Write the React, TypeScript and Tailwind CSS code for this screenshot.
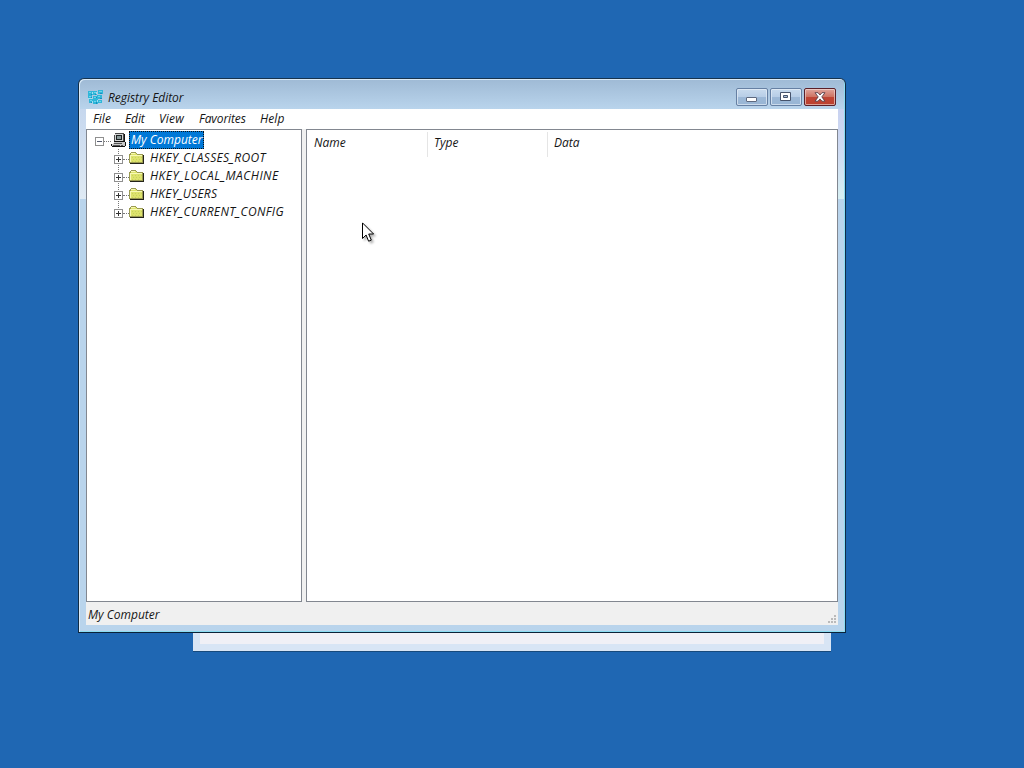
import type { ReactNode } from "react";

const menus = [
  { label: "File", box: "w-[32px]", tracking: "tracking-[0.05px]" },
  { label: "Edit", box: "w-[34px]", tracking: "tracking-[-0.1px]" },
  { label: "View", box: "w-[40px]", tracking: "tracking-[0.2px]" },
  { label: "Favorites", box: "w-[61px]", tracking: "tracking-[-0.1px]" },
  { label: "Help", box: "w-[40px]", tracking: "tracking-[0.1px]" },
];

const keys = [
  { label: "HKEY_CLASSES_ROOT", tracking: "tracking-[0.3px]" },
  { label: "HKEY_LOCAL_MACHINE", tracking: "tracking-[0.46px]" },
  { label: "HKEY_USERS", tracking: "tracking-[0.2px]" },
  { label: "HKEY_CURRENT_CONFIG", tracking: "tracking-[0.34px]" },
];

const columns = [
  { label: "Name", box: "w-[121px] border-r pl-[7px]" },
  { label: "Type", box: "w-[120px] border-r pl-[6px]" },
  { label: "Data", box: "w-[120px] pl-[6px]" },
];

function RegistryIcon() {
  return (
    <svg width="16" height="16" viewBox="0 0 16 16" shapeRendering="crispEdges">
      <path fill="#2fb6d9" d="M0 2h5v4H0zM5 2h4v4H5zM10 1h5v4h-5zM0 6h4v4H0zM5 7h4v3H5zM9 6h5v4H9zM1 10h4v4H1zM5 10h5v5H5zM10 11h4v3h-4z" />
      <path fill="#6ad6ec" d="M1 3h2v1H1zM6 3h2v1H6zM11 2h3v1h-3zM1 7h2v1H1zM6 8h2v1H6zM10 7h2v1h-2zM2 11h2v1H2zM6 12h2v1H6zM11 12h2v1h-2z" />
      <path fill="#a5dcee" d="M4 3h1v2H4zM8 3h1v2H8zM0 9h4v1H0zM4 12h1v2H4zM9 11h1v2H9z" />
      <path fill="#178fbe" d="M3 5h1v1H3zM7 5h1v1H7zM12 4h2v1h-2zM3 8h1v1H3zM8 8h1v1H8zM12 9h2v1h-2zM3 13h1v1H3zM8 13h1v2H8z" />
    </svg>
  );
}

function ComputerIcon() {
  return (
    <svg width="16" height="16" viewBox="0 0 16 16" shapeRendering="crispEdges">
      <path fill="#4a4a4a" d="M4 1h9v1h1v8H3V3h1z" />
      <path fill="#111" d="M13 2h1v8h-1zM3 9h10v1H3zM14 10h1v4h-1v1H1v-1h13zM0 12h1v2H0z" />
      <path fill="#d2d2d2" d="M4 2h8v1H4zM4 3h1v6H4zM11 3h1v6h-1zM5 8h6v1H5z" />
      <path fill="#1d2424" d="M5 3h6v5H5z" />
      <path fill="#8a9999" d="M6 4h4v3H6z" />
      <path fill="#c9c9c9" d="M3 10h11v1H3zM2 11h12v1H2zM1 12h13v2H1z" />
      <path fill="#555" d="M3 11h8v1H3zM2 13h7v1H2zM10 13h2v1h-2z" />
    </svg>
  );
}

function FolderIcon() {
  return (
    <svg width="15" height="12" viewBox="0 0 15 12" shapeRendering="crispEdges">
      <path fill="#9a9a52" d="M2 0h5v1h1v1h6v9H0V2h1V1h1z" />
      <path fill="#dde36c" d="M2 1h5v1h1v1h5v7H1V3h1z" />
      <path fill="#f7f8b6" d="M2 1h4v1H2zM1 3h12v1H1zM1 4h1v6H1z" />
      <path fill="#c8d15e" d="M3 5h1v1H3zM6 5h1v1H6zM9 5h1v1H9zM12 5h1v1h-1zM4 7h1v1H4zM7 7h1v1H7zM10 7h1v1h-1zM3 9h1v1H3zM6 9h1v1H6zM9 9h1v1H9z" />
      <path fill="#24241a" d="M14 3h1v9h-1zM1 11h14v1H1z" />
    </svg>
  );
}

function Expander({ open = false }: { open?: boolean }) {
  return (
    <svg width="9" height="9" viewBox="0 0 9 9" shapeRendering="crispEdges" className="shrink-0">
      <path fill="#fff" stroke="#8f8f8f" d="M.5.5h8v8h-8z" />
      <path fill={open ? "#555b70" : "#333"} d={open ? "M2 4h5v1H2z" : "M2 4h5v1H2zM4 2h1v5H4z"} />
    </svg>
  );
}

function CaptionButton({ danger = false, children }: { danger?: boolean; children: ReactNode }) {
  const skin = danger
    ? "border-[#5b2029] bg-linear-to-b from-[#e0a69d] from-0% via-[#cf7666] via-45% to-[#c2604e]"
    : "border-[#6680a3] bg-linear-to-b from-[#c9dbee] from-0% via-[#b9cfe7] via-45% to-[#a9c3df]";
  return (
    <div className={`flex h-[18px] w-8 flex-col rounded-[2px] border shadow-[inset_0_0_0_1px_rgba(255,255,255,0.4)] ${skin}`}>
      <div className={`mx-px mt-2 mb-px h-[7px] shrink-0 ${danger ? "bg-[#b93626]/75" : "bg-[#91afd0]/70"}`} />
      <div className="-mt-[16px] flex h-[14px] shrink-0 items-center justify-center pr-px">{children}</div>
    </div>
  );
}

function TitleBar() {
  return (
    <div className="flex h-[30px] shrink-0 items-start pr-[9px] pl-[9px]">
      <div className="mt-[10px] h-4 w-4">
        <RegistryIcon />
      </div>
      <span className="mt-[11px] ml-1 text-[12px] leading-4 tracking-[-0.05px]">Registry Editor</span>
      <div className="mt-[9px] ml-auto flex gap-0.5">
        <CaptionButton>
          <svg width="11" height="12" viewBox="0 0 11 12" className="mt-[3px]">
            <rect x=".5" y="5.5" width="10" height="4" rx=".5" fill="#fff" stroke="#5d697f" />
          </svg>
        </CaptionButton>
        <CaptionButton>
          <svg width="11" height="9" viewBox="0 0 11 9" className="mt-[1px]">
            <path fill="#fff" stroke="#46536b" d="M.5.5h10v8H.5z" />
            <path fill="#a9bfd9" stroke="#46536b" d="M3.5 3.5h4v2h-4z" />
          </svg>
        </CaptionButton>
        <CaptionButton danger>
          <svg width="12" height="10" viewBox="0 0 12 10" className="mt-[1px]">
            <path
              fill="#fff"
              stroke="#59404a"
              strokeWidth=".9"
              d="M1 .7h3L6 3 8 .7h3L7.8 4.9 11 9.2H8L6 6.9 4 9.2H1l3.2-4.3z"
            />
          </svg>
        </CaptionButton>
      </div>
    </div>
  );
}

function Tree() {
  return (
    <div className="relative w-[216px] border border-[#828790] bg-white pt-px">
      <div className="absolute top-[19px] left-[31px] h-[65px] border-l border-dotted border-[#777]" />
      <div className="flex h-[18px] items-center pl-2">
        <div className="mt-[3px]">
          <Expander open />
        </div>
        <div className="mt-[3px] w-[7px] border-t border-dotted border-[#777]" />
        <div className="h-4 w-4">
          <ComputerIcon />
        </div>
        <span className="ml-[2px] h-[18px] w-[75px] border border-dotted border-[#111] bg-[#0078d7] pl-px text-[12px] leading-[16px] tracking-[0px] whitespace-nowrap text-white">
          My Computer
        </span>
      </div>
      {keys.map((key) => (
        <div key={key.label} className="relative flex h-[18px] items-center pl-[27px]">
          <div className="mt-[3px]">
            <Expander />
          </div>
          <div className="mt-[3px] w-[6px] border-t border-dotted border-[#777]" />
          <FolderIcon />
          <span className={`ml-[6px] text-[12px] leading-[18px] whitespace-nowrap ${key.tracking}`}>
            {key.label}
          </span>
        </div>
      ))}
    </div>
  );
}

function ValueList() {
  return (
    <div className="w-[532px] border border-[#828790] bg-white">
      <div className="flex h-[27px] pt-0.5">
        {columns.map((col) => (
          <div key={col.label} className={`border-[#e5e5e5] text-[12px] leading-[21px] tracking-[0px] ${col.box}`}>
            {col.label}
          </div>
        ))}
      </div>
    </div>
  );
}

function StatusBar() {
  return (
    <div className="flex h-[23px] shrink-0 items-end justify-between bg-[#f0f0f0] pr-px pb-px pl-0.5">
      <span className="self-center pt-[3px] text-[12px] leading-4 tracking-[0px]">My Computer</span>
      <svg width="9" height="9" viewBox="0 0 9 9" fill="#bababa" shapeRendering="crispEdges">
        <path d="M6 0h2v2H6zM3 3h2v2H3zM6 3h2v2H6zM0 6h2v2H0zM3 6h2v2H3zM6 6h2v2H6z" />
      </svg>
    </div>
  );
}

function Cursor() {
  return (
    <svg
      width="13"
      height="21"
      viewBox="0 0 13 21"
      className="absolute top-[222px] left-[362px] drop-shadow-[2px_2px_1px_rgba(0,0,0,0.3)]"
    >
      <path fill="#fff" stroke="#000" d="M.5.9v15.6l3.6-3.5 2.5 6.2 2.7-1.1L6.7 12h4.9z" />
    </svg>
  );
}

export default function App() {
  return (
    <main className="relative h-screen w-screen overflow-hidden bg-[#1f67b3] font-['Open_Sans',sans-serif] text-[#151515] italic select-none">
      {/* window behind the editor */}
      <div className="absolute top-[620px] left-[193px] h-[31px] w-[638px] border-x-[7px] border-b-[7px] border-[#d8e5f5] bg-[#f0f0f6] shadow-[0_1px_0_#174a7c]" />

      <section className="absolute top-[78px] left-[78px] flex h-[555px] w-[768px] flex-col rounded-t-[6px] border border-r-[#102c46] border-b-[#0b2238] border-l-[#102c46] border-t-[#17334d] bg-[#b9d4ec] bg-linear-to-b from-[#9fbad5] to-[#b9d4ec] to-[30px] shadow-[inset_1px_1px_0_#d9eaf8,inset_-1px_-1px_0_#8bdcf2]">
        <TitleBar />
        <div className="ml-[7px] flex h-5 w-[752px] shrink-0 bg-white pl-[7px]">
          {menus.map((menu) => (
            <span key={menu.label} className={`shrink-0 text-[12px] leading-[19px] ${menu.box} ${menu.tracking}`}>
              {menu.label}
            </span>
          ))}
        </div>
        <div className="ml-[7px] flex h-[473px] w-[752px] shrink-0 gap-1 bg-[#f0f0f0]">
          <Tree />
          <ValueList />
        </div>
        <div className="ml-[7px] w-[752px]">
          <StatusBar />
        </div>
        {/* glass reflections down both sides */}
        <div className="absolute top-[30px] left-px h-[90px] w-[6px] bg-linear-to-b from-[#c6d7ee] to-[#dfeaf4]" />
        <div className="absolute top-[30px] right-px h-[90px] w-[6px] bg-linear-to-b from-[#c9d2f0] via-[#cfdcf3] to-[#d7f0f3]" />
      </section>

      <Cursor />
    </main>
  );
}
